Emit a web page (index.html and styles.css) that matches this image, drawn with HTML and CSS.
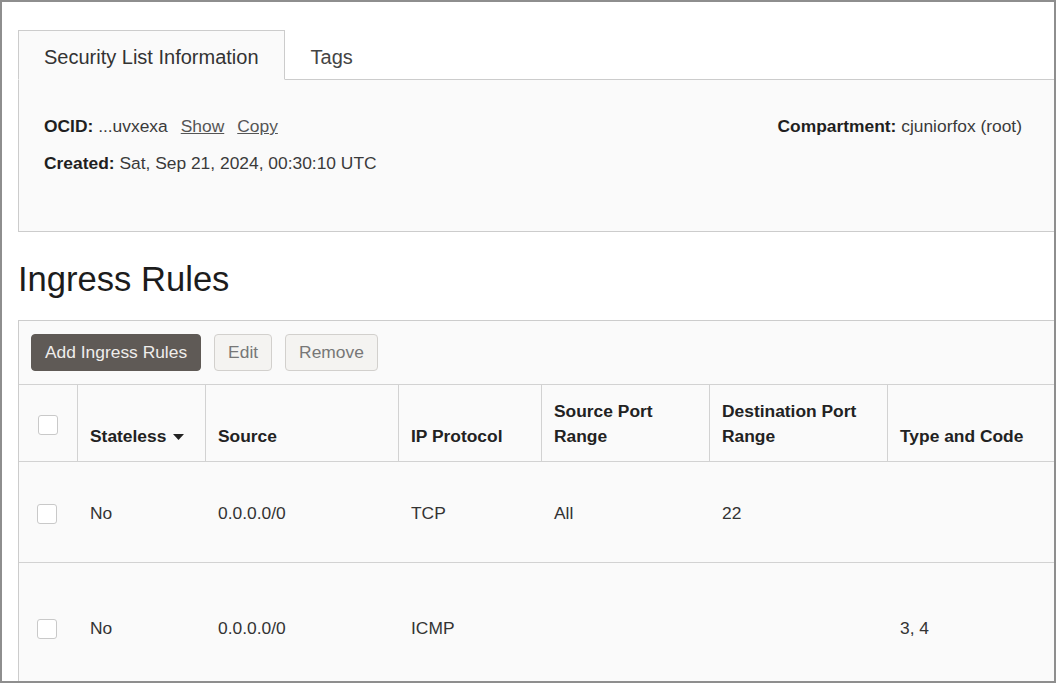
FILE: index.html
```html
<!DOCTYPE html>
<html lang="en">
<head>
<meta charset="utf-8">
<title>Security List</title>
<link rel="stylesheet" href="styles.css">
</head>
<body>
<div class="frame">
  <div class="page">
    <div class="tabs">
      <div class="tab active">Security List Information</div>
      <div class="tab">Tags</div>
    </div>
    <div class="info-panel">
      <div class="info-col">
        <div class="info-row"><span class="label">OCID:</span> <span class="val">...uvxexa</span><a class="link">Show</a><a class="link">Copy</a></div>
        <div class="info-row"><span class="label">Created:</span> <span class="val">Sat, Sep 21, 2024, 00:30:10 UTC</span></div>
      </div>
      <div class="info-col right">
        <div class="info-row"><span class="label">Compartment:</span> <span class="val">cjuniorfox (root)</span></div>
      </div>
    </div>

    <h1 class="heading">Ingress Rules</h1>

    <div class="table-card">
      <div class="toolbar">
        <button class="btn primary">Add Ingress Rules</button>
        <button class="btn">Edit</button>
        <button class="btn">Remove</button>
      </div>
      <div class="grid-row head">
        <div class="cell chk"><span class="checkbox"></span></div>
        <div class="cell">Stateless <svg class="sort" width="11" height="6" viewBox="0 0 11 6"><path d="M0 0 H11 L5.5 6 Z" fill="#222"/></svg></div>
        <div class="cell">Source</div>
        <div class="cell">IP Protocol</div>
        <div class="cell">Source Port<br>Range</div>
        <div class="cell">Destination Port<br>Range</div>
        <div class="cell">Type and Code</div>
      </div>
      <div class="grid-row data r1">
        <div class="cell chk"><span class="checkbox"></span></div>
        <div class="cell">No</div>
        <div class="cell">0.0.0.0/0</div>
        <div class="cell">TCP</div>
        <div class="cell">All</div>
        <div class="cell">22</div>
        <div class="cell"></div>
      </div>
      <div class="grid-row data r2">
        <div class="cell chk"><span class="checkbox"></span></div>
        <div class="cell">No</div>
        <div class="cell">0.0.0.0/0</div>
        <div class="cell">ICMP</div>
        <div class="cell"></div>
        <div class="cell"></div>
        <div class="cell">3, 4</div>
      </div>
    </div>
  </div>
</div>
</body>
</html>
```
FILE: styles.css
```css
* { box-sizing: border-box; }
html, body { margin: 0; padding: 0; background: #fff; }
body {
  font-family: "Liberation Sans", Arial, Helvetica, sans-serif;
  font-size: 17.4px;
  color: #333;
}
.frame {
  width: 1056px;
  height: 683px;
  border: 2px solid #8e8e8e;
  overflow: hidden;
  background: #fff;
}
.page {
  padding: 28px 0 0 16px;
}
.tabs {
  display: flex;
  border-bottom: 1px solid #cccccc;
  margin-right: -8px;
}
.tab {
  font-size: 20px;
  line-height: 25px;
  padding: 14px 25px 9px 25px;
  border: 1px solid transparent;
  margin-bottom: -1px;
  color: #444;
}
.tab.active {
  background: #fafafa;
  border-color: #cccccc;
  border-bottom-color: #fafafa;
  color: #333;
}
.info-panel {
  display: flex;
  justify-content: space-between;
  background: #fafafa;
  border: 1px solid #cccccc;
  border-top: none;
  margin-right: -8px;
  padding: 34px 39px 55px 25px;
}
.info-col { display: flex; flex-direction: column; gap: 12px; }
.info-row { line-height: 25px; white-space: nowrap; }
.label { font-weight: bold; color: #1f1f1f; }
.val { color: #3a3a3a; }
.link {
  color: #555;
  text-decoration: underline;
  margin-left: 13px;
}
.heading {
  margin: 26px 0 20px 0;
  font-size: 34.6px;
  line-height: 42px;
  font-weight: normal;
  color: #1c1c1c;
}
.table-card {
  border: 1px solid #cccccc;
  border-right: none;
  background: #fafafa;
  margin-right: -8px;
}
.toolbar {
  display: flex;
  gap: 13px;
  padding: 13px 12px;
  border-bottom: 1px solid #d2d2d2;
}
.btn {
  font-family: inherit;
  font-size: 17.4px;
  height: 37px;
  padding: 0 13px;
  border: 1px solid #d2d0cd;
  border-radius: 4px;
  background: #f4f3f1;
  color: #777;
}
.btn.primary {
  background: #5f5a56;
  border-color: #5f5a56;
  color: #efedeb;
}
.grid-row {
  display: grid;
  grid-template-columns: 58px 128px 193px 143px 168px 178px 220px;
  border-bottom: 1px solid #d2d2d2;
}
.head .cell {
  height: 76px;
  display: flex;
  align-items: flex-end;
  padding: 0 12px 12px 12px;
  border-left: 1px solid #d2d2d2;
  font-weight: bold;
  color: #222;
  line-height: 25px;
}
.head .cell.chk {
  border-left: none;
  align-items: center;
  justify-content: center;
  padding: 4px 0 0 0;
}
.sort { margin: 0 0 9px 7px; }
.data .cell {
  display: flex;
  align-items: center;
  padding: 3px 13px 0 13px;
  line-height: 25px;
  color: #333;
}
.data .cell.chk { justify-content: center; padding: 3px 2px 0 0; }
.r1 { height: 101px; }
.r2 { height: 129px; }
.checkbox {
  display: block;
  width: 20px;
  height: 20px;
  border: 1px solid #c9c9c9;
  border-radius: 3px;
  background: #fff;
}
```
